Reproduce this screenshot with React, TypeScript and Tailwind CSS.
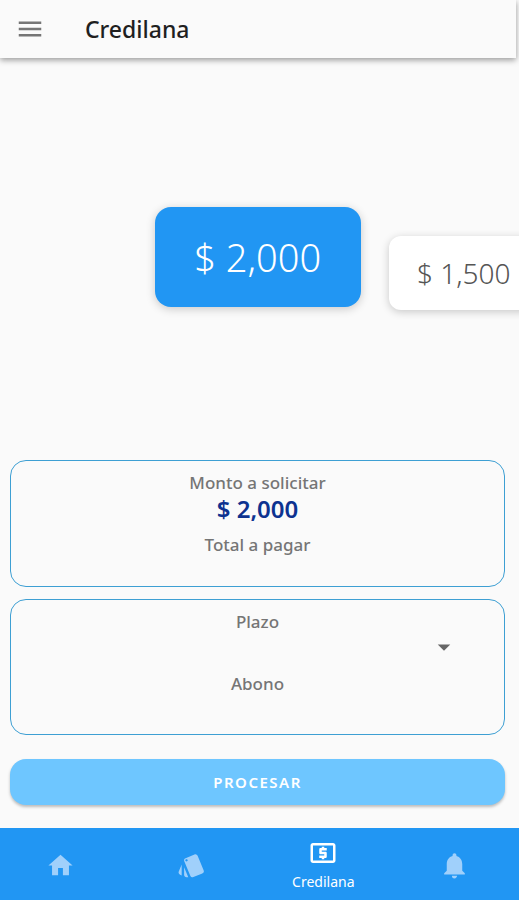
import { ReactElement } from 'react'
import { MdArrowDropDown, MdHome, MdLocalAtm, MdMenu, MdNotifications, MdStyle } from 'react-icons/md'

function NavItem({ icon, label, title }: {
    icon: ReactElement
    label: string
    title?: string
}) {
    return <a href="#" aria-label={ label }
        aria-current={ title ? 'page' : undefined }
        className={ `flex w-20 flex-col items-center justify-center pt-0.5 ${title ? 'text-white' : 'text-[#a0d0fb]'}` }>
        { icon }
        { title && <span className="mt-1 text-[14px] leading-5">{ title }</span> }
    </a>
}

function Carousel() {
    return <section className="flex grow items-center overflow-hidden pb-1 pl-[30%]">
        <div className="-ml-px flex items-center gap-7 py-5">
            <button className="h-[100px] w-[206px] shrink-0 rounded-2xl bg-[#2196f3] text-[38px] font-light text-white shadow-[0_2px_10px_rgba(0,0,0,0.2)]">
                $ 2,000
            </button>
            <button className="mt-8 h-[74px] w-[150px] shrink-0 rounded-xl bg-white text-[28px] font-light text-[#555] shadow-[0_2px_8px_rgba(0,0,0,0.2)]">
                $ 1,500
            </button>
        </div>
    </section>
}

function Summary() {
    return <section className="flex h-[127px] flex-col items-center rounded-2xl border border-[#3d9fd3] pt-3 text-center">
        <p className="text-[17px] leading-5 font-medium text-[#757575]">Monto a solicitar</p>
        <p className="text-[24px] leading-8 font-semibold text-[#0d3290]">$ 2,000</p>
        <p className="mt-1 text-[17px] leading-8 font-medium text-[#757575]">Total a pagar</p>
    </section>
}

function Term() {
    return <section className="mt-3 flex h-[136px] flex-col items-center rounded-2xl border border-[#3d9fd3] pt-3 text-center text-[17px] font-medium text-[#757575]">
        <label htmlFor="plazo" className="leading-5">Plazo</label>
        <div className="relative mb-2 h-8 w-4/5">
            <select id="plazo" className="h-full w-full appearance-none bg-transparent" />
            <MdArrowDropDown size={ 30 } className="pointer-events-none absolute top-0 -right-1 text-[#666]" />
        </div>
        <p className="leading-6">Abono</p>
    </section>
}

export default () => {
    return <div className="flex min-h-screen flex-col bg-[#fafafa] font-['Noto_Sans','Open_Sans',sans-serif]">
        <header className="mr-[3px] flex h-[58px] items-center bg-[#fafafa] pl-[15px] shadow-[0_2px_6px_rgba(0,0,0,0.4)]">
            <button aria-label="Menu" className="text-[#757575]">
                <MdMenu size={ 30 } />
            </button>
            <h1 className="ml-10 text-[23px] font-medium text-[#1f1f1f]">Credilana</h1>
        </header>
        <main className="flex grow flex-col">
            <Carousel />
            <div className="pr-3.5 pb-[23px] pl-2.5">
                <Summary />
                <Term />
                <button className="mt-6 h-[46px] w-full rounded-2xl bg-[#6ec6ff] text-[15px] font-semibold tracking-widest text-white shadow-[0_2px_3px_rgba(0,0,0,0.25)]">
                    PROCESAR
                </button>
            </div>
        </main>
        <nav className="flex h-[72px] justify-between bg-[#2196f3] pr-6 pl-5">
            <NavItem icon={ <MdHome size={ 29 } /> } label="Inicio" />
            <NavItem icon={ <MdStyle size={ 29 } /> } label="Tarjetas" />
            <NavItem icon={ <MdLocalAtm size={ 30 } /> } label="Credilana" title="Credilana" />
            <NavItem icon={ <MdNotifications size={ 31 } /> } label="Notificaciones" />
        </nav>
    </div>
}
